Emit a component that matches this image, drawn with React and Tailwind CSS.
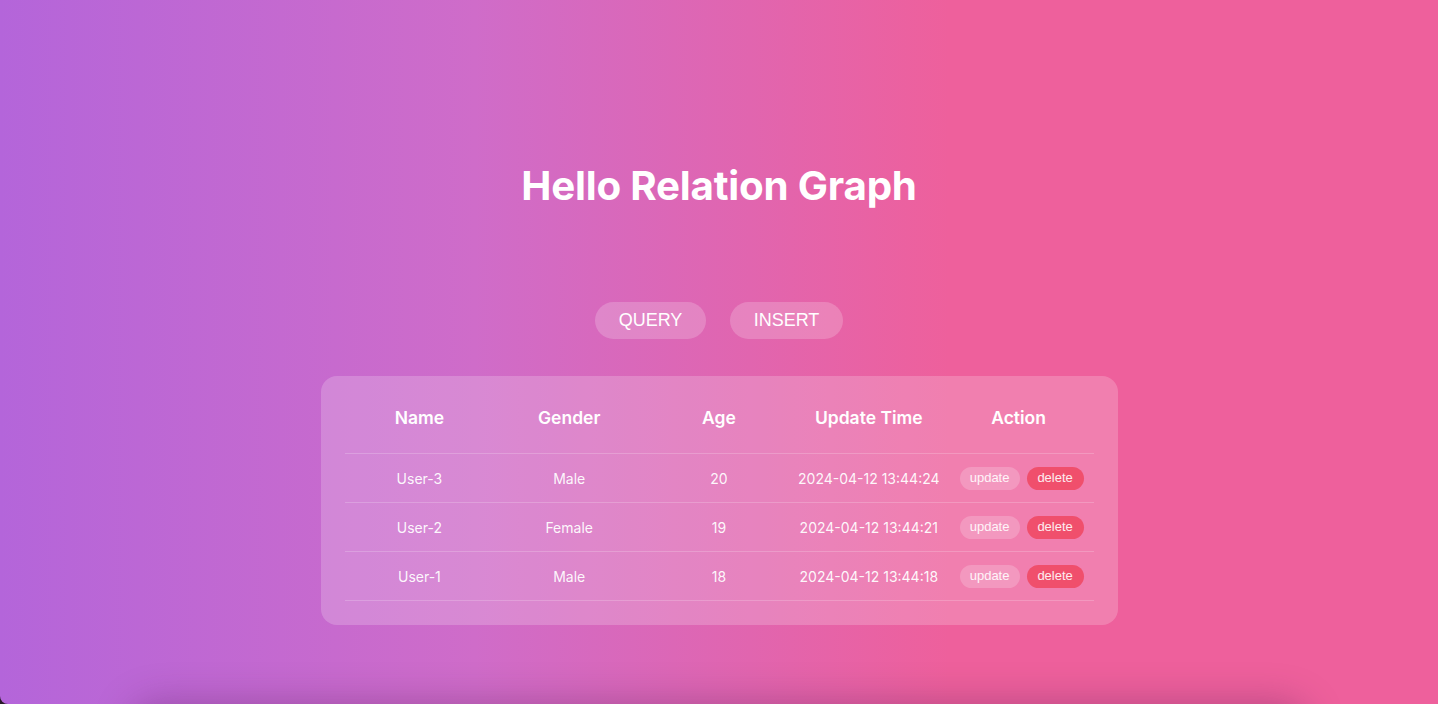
import React from "react";

const rows = [
  { name: "User-3", gender: "Male", age: 20, time: "2024-04-12 13:44:24" },
  { name: "User-2", gender: "Female", age: 19, time: "2024-04-12 13:44:21" },
  { name: "User-1", gender: "Male", age: 18, time: "2024-04-12 13:44:18" },
];

export default function App() {
  return (
    <div className="w-[1438px] h-[704px] overflow-hidden bg-[#2a1a2a]">
      <div
        className="relative overflow-hidden w-full h-full rounded-bl-[8px] bg-[linear-gradient(to_right,#b465da_0%,#cf6cc9_33%,#ee609c_66%,#ee609c_100%)] flex flex-col items-center"
        style={{ fontFamily: "Inter, 'Noto Sans', sans-serif" }}
      >
        <h1 className="mt-[160px] text-[40.3px] leading-[52px] font-bold text-white tracking-[-0.2px]">
          Hello Relation Graph
        </h1>
        <div className="mt-[90px] flex gap-[24px]" style={{ fontFamily: "'Liberation Sans', Arial, sans-serif" }}>
          <button className="w-[111px] h-[37px] rounded-full bg-white/20 text-white text-[18px]">QUERY</button>
          <button className="w-[113px] h-[37px] rounded-full bg-white/20 text-white text-[18px]">INSERT</button>
        </div>
        <div className="mt-[37px] w-[797px] rounded-[16px] bg-white/20 px-[24px] pt-[24px] pb-[24px]">
          <div className="grid grid-cols-5 pt-[7px] pb-[24px] border-b border-white/20 text-white text-[17.5px] leading-[22px] font-semibold text-center">
            <div>Name</div>
            <div>Gender</div>
            <div>Age</div>
            <div>Update Time</div>
            <div>Action</div>
          </div>
          {rows.map((r) => (
            <div
              key={r.name}
              className="grid grid-cols-5 h-[49px] items-center border-b border-white/20 text-white/95 text-[14px] text-center whitespace-nowrap"
            >
              <div>{r.name}</div>
              <div>{r.gender}</div>
              <div>{r.age}</div>
              <div>{r.time}</div>
              <div className="flex justify-center gap-[7px] pl-[6px]" style={{ fontFamily: "'Liberation Sans', Arial, sans-serif" }}>
                <button className="w-[60px] h-[23px] rounded-full bg-white/20 text-white/90 text-[13px]">update</button>
                <button className="w-[57px] h-[23px] rounded-full bg-[#f04f6c] text-white/90 text-[13px]">delete</button>
              </div>
            </div>
          ))}
        </div>
        <div className="absolute left-[140px] right-[140px] top-[712px] h-[40px] rounded-[20px] shadow-[0_0_36px_10px_rgba(90,30,90,0.35)]" />
      </div>
    </div>
  );
}
